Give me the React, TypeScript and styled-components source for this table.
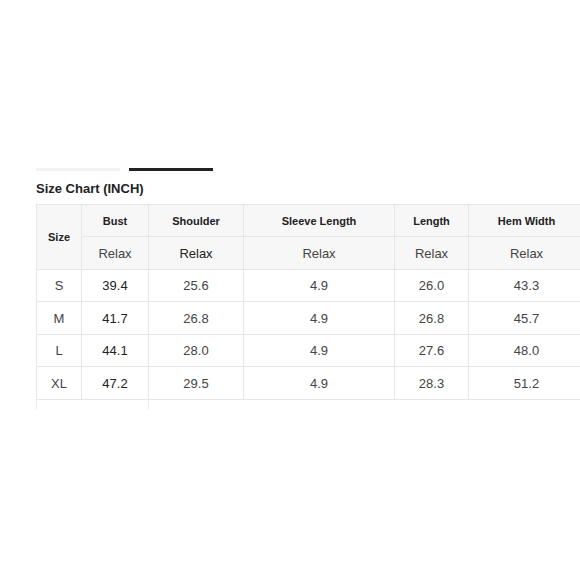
import * as React from 'react';
import styled, { createGlobalStyle } from 'styled-components';

const GlobalStyle = createGlobalStyle`
  html, body {
    margin: 0;
    padding: 0;
    background: #fff;
    overflow: hidden;
  }
  body {
    font-family: 'Liberation Sans', Arial, sans-serif;
    color: #333;
  }
`;

const Page = styled('div')`
  width: 580px;
  height: 580px;
  padding: 168px 0 0 36px;
  box-sizing: border-box;
  overflow: hidden;
`;

const Tabs = styled('div')`
  display: flex;
  gap: 9px;
`;

const Tab = styled('div')<{ $active?: boolean }>`
  width: 84px;
  height: 3px;
  background: ${(p) => (p.$active ? '#222' : '#f2f2f2')};
`;

const Title = styled('h3')`
  margin: 10px 0 0;
  font-size: 13px;
  font-weight: bold;
  line-height: 16px;
  color: #222;
`;

const Table = styled('table')`
  margin-top: 7px;
  border-collapse: collapse;
  table-layout: fixed;
  width: 548px;
  font-size: 13px;
`;

const HeadCell = styled('th')<{ $soft?: boolean }>`
  background: #f7f7f7;
  border: 1px solid #e6e6e6;
  font-size: ${(p) => (p.$soft ? '13px' : '11px')};
  font-weight: ${(p) => (p.$soft ? 'normal' : 'bold')};
  color: ${(p) => (p.$soft ? '#444' : '#222')};
  text-align: center;
  padding: 0;
`;

const Row = styled('tr')<{ $h: number }>`
  height: ${(p) => p.$h}px;
`;

const Cell = styled('td')<{ $strong?: boolean }>`
  border: 1px solid #e6e6e6;
  text-align: center;
  padding: 0;
  color: ${(p) => (p.$strong ? '#222' : '#444')};
`;

const Trail = styled('div')`
  width: 111px;
  height: 10px;
  border-left: 1px solid #ececec;
  border-right: 1px solid #ececec;
`;

const widths = [45, 67, 95, 151, 74, 116];
const heads = ['Bust', 'Shoulder', 'Sleeve Length', 'Length', 'Hem Width'];
const rows: [string, string, string, string, string, string][] = [
  ['S', '39.4', '25.6', '4.9', '26.0', '43.3'],
  ['M', '41.7', '26.8', '4.9', '26.8', '45.7'],
  ['L', '44.1', '28.0', '4.9', '27.6', '48.0'],
  ['XL', '47.2', '29.5', '4.9', '28.3', '51.2'],
];

const App: React.FC = () => {
  return (
    <Page>
      <GlobalStyle />
      <Tabs>
        <Tab />
        <Tab $active />
      </Tabs>
      <Title>Size Chart (INCH)</Title>
      <Table>
        <colgroup>
          {widths.map((w, i) => (
            <col key={i} style={{ width: w }} />
          ))}
        </colgroup>
        <thead>
          <Row $h={32}>
            <HeadCell rowSpan={2}>Size</HeadCell>
            {heads.map((h) => (
              <HeadCell key={h}>{h}</HeadCell>
            ))}
          </Row>
          <Row $h={33}>
            {heads.map((h, i) => (
              <HeadCell key={h} $soft style={i === 1 ? { color: '#222' } : undefined}>
                Relax
              </HeadCell>
            ))}
          </Row>
        </thead>
        <tbody>
          {rows.map((r, ri) => (
            <Row key={r[0]} $h={ri % 2 ? 33 : 32}>
              {r.map((v, i) => (
                <Cell key={i} $strong={i === 1}>
                  {v}
                </Cell>
              ))}
            </Row>
          ))}
        </tbody>
      </Table>
      <Trail />
    </Page>
  );
};

export default App;
